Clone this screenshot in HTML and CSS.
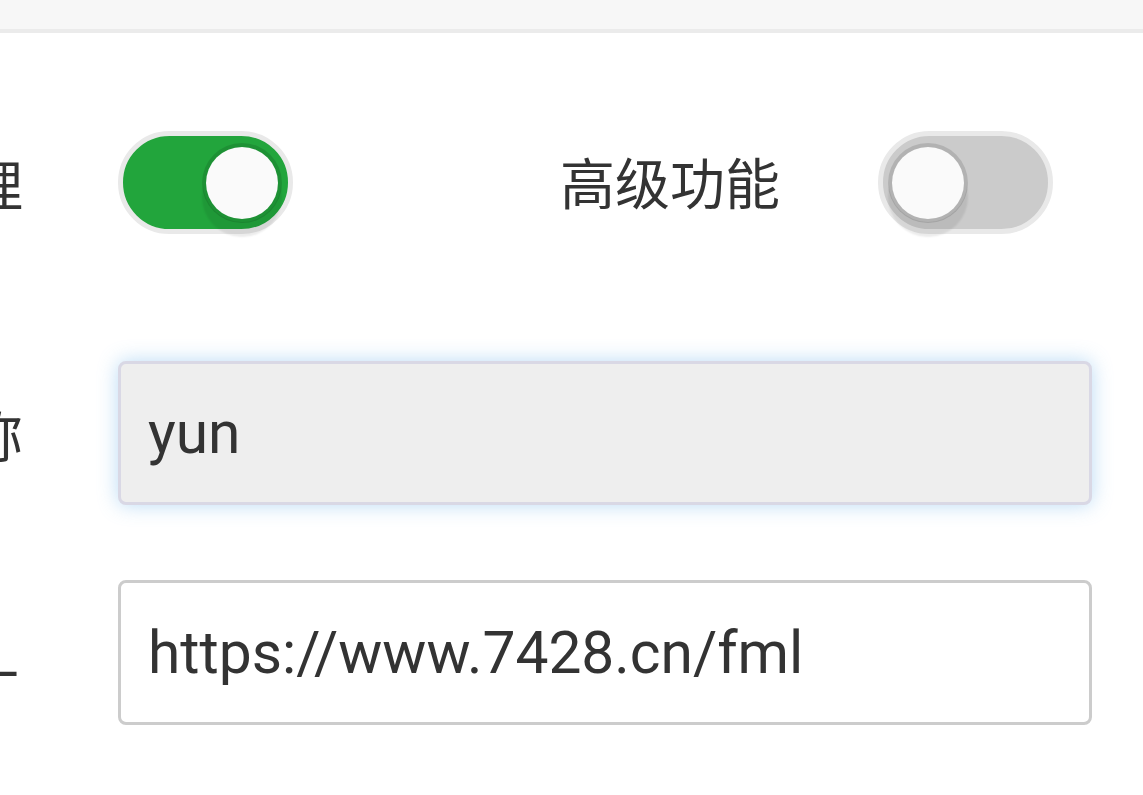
FILE: index.html
```html
<!DOCTYPE html>
<html lang="zh-CN">
<head>
<meta charset="utf-8">
<title>设置</title>
<link rel="stylesheet" href="styles.css">
</head>
<body>
<div class="topbar"></div>
<form class="form">
  <div class="row row-switch">
    <label class="label">网站管理</label>
    <div class="controls">
      <span class="switch on"><span class="knob"></span></span>
      <label class="label label-inline">高级功能</label>
      <span class="switch off"><span class="knob"></span></span>
    </div>
  </div>
  <div class="row row-first-input">
    <label class="label">用户昵称</label>
    <div class="controls">
      <input class="input input-focus" type="text" value="yun">
    </div>
  </div>
  <div class="row row-input">
    <label class="label label-latin">网站URL</label>
    <div class="controls">
      <input class="input" type="text" value="https://www.7428.cn/fml">
    </div>
  </div>
</form>
</body>
</html>
```

FILE: styles.css
```css
html, body {
  margin: 0;
  padding: 0;
  background: #ffffff;
  overflow: hidden;
}

body {
  font-family: "Noto Sans CJK SC", "Noto Sans", sans-serif;
  color: #333333;
}

.topbar {
  height: 29px;
  background: #f7f7f7;
  border-bottom: 4px solid #ebebeb;
}

.form {
  width: 1309px;
  margin-left: -217px;
}

.row {
  display: grid;
  grid-template-columns: 240px 974px;
  column-gap: 95px;
  align-items: center;
}

.row-switch {
  margin-top: 98px;
}

.row-first-input {
  margin-top: 127px;
}

.row-input {
  margin-top: 75px;
}

.label {
  font-size: 55px;
  line-height: 1;
  text-align: right;
  white-space: nowrap;
  color: #333333;
}

.label-latin {
  padding-right: 5px;
}

.controls {
  display: flex;
  align-items: center;
}

.label-inline {
  width: 487px;
  margin-right: 98px;
  padding-bottom: 4px;
}

.switch {
  box-sizing: border-box;
  width: 175px;
  height: 103px;
  border: 5px solid #e9e9e9;
  border-radius: 52px;
  padding: 0 6px;
  display: flex;
  align-items: center;
}

.switch.on {
  background: #22a53c;
  justify-content: flex-end;
}

.switch.off {
  background: #cbcbcb;
  justify-content: flex-start;
  padding-left: 5px;
}

.knob {
  box-sizing: border-box;
  width: 80px;
  height: 80px;
  border-radius: 50%;
  background: #fafafa;
  background-clip: padding-box;
  border: 4px solid rgba(0, 0, 0, 0.12);
  box-shadow: 0 14px 2px rgba(0, 0, 0, 0.08);
}

.input {
  box-sizing: border-box;
  width: 974px;
  height: 145px;
  margin: 0;
  padding: 0 27px;
  border: 3px solid #cccccc;
  border-radius: 8px;
  background: #ffffff;
  font-family: Roboto, "Noto Sans", sans-serif;
  font-size: 58.7px;
  color: #333333;
  outline: none;
}

.input-focus {
  height: 144px;
  background: #eeeeee;
  border-color: #d9d8e5;
  box-shadow: 0 0 20px rgba(102, 175, 233, 0.45);
}
```
